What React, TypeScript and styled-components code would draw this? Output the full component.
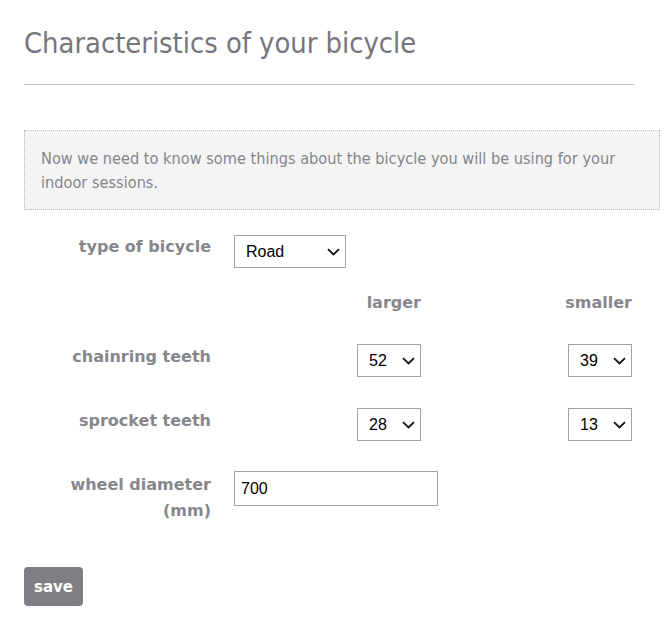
import styled, { createGlobalStyle } from 'styled-components';

const GlobalStyle = createGlobalStyle`
  body {
    margin: 0;
    background: #ffffff;
    font-family: "DejaVu Sans Condensed", "DejaVu Sans", sans-serif;
  }
`;

const Page = styled.div`
  padding: 0 4px 0 24px;
`;

const Title = styled.h1`
  margin: 26px 0 0;
  font-size: 28.8px;
  line-height: 34px;
  font-weight: normal;
  color: #76767b;
`;

const Rule = styled.hr`
  margin: 24px 26px 0 0;
  border: 0;
  border-top: 1px solid #bcbcbc;
`;

const Intro = styled.div`
  margin-top: 45px;
  padding: 16px 16px 14px;
  background: #f4f4f4;
  border: 1px dotted #b8b8b8;
  color: #85858a;
  font-size: 16.2px;
  line-height: 24px;
`;

const Form = styled.div`
  display: grid;
  grid-template-columns: 187px 187px 188px;
  column-gap: 23px;
  margin-top: 24px;
`;

const Row = styled.div`
  display: contents;
`;

const Label = styled.div<{ $top: number }>`
  grid-column: 1;
  margin-top: ${(p) => p.$top}px;
  text-align: right;
  font-family: "DejaVu Sans", sans-serif;
  font-weight: bold;
  font-size: 16px;
  line-height: 26px;
  color: #87878b;
`;

const Cell = styled.div<{ $top: number; $align?: string; $span?: number }>`
  margin-top: ${(p) => p.$top}px;
  display: flex;
  justify-content: ${(p) => p.$align ?? 'flex-start'};
  grid-column: ${(p) => (p.$span ? `span ${p.$span}` : 'auto')};
`;

const Heading = styled.div<{ $top: number }>`
  margin-top: ${(p) => p.$top}px;
  text-align: right;
  font-family: "DejaVu Sans", sans-serif;
  font-weight: bold;
  font-size: 16px;
  line-height: 20px;
  color: #87878b;
`;

const SelectWrap = styled.div<{ $width: number }>`
  position: relative;
  width: ${(p) => p.$width}px;
  height: 33px;
`;

const Select = styled.select`
  appearance: none;
  width: 100%;
  height: 100%;
  border: 1px solid #a3a3a3;
  border-radius: 0;
  background: #ffffff;
  padding: 0 0 0 11px;
  font-family: "Liberation Sans", Arial, sans-serif;
  font-size: 16px;
  color: #000000;
  outline: none;
`;

const Chevron = styled.svg`
  position: absolute;
  right: 6px;
  top: 13px;
  width: 13px;
  height: 8px;
  pointer-events: none;
`;

const TextInput = styled.input`
  box-sizing: border-box;
  width: 204px;
  height: 35px;
  border: 1px solid #a3a3a3;
  padding: 0 6px;
  font-family: "Liberation Sans", Arial, sans-serif;
  font-size: 16px;
  color: #000000;
  outline: none;
`;

const SaveButton = styled.button`
  display: block;
  margin-top: 43px;
  width: 59px;
  height: 39px;
  border: 0;
  border-radius: 4px;
  background: #7f7f83;
  color: #ffffff;
  font-family: "DejaVu Sans", sans-serif;
  font-weight: bold;
  font-size: 15px;
  padding: 0;
  cursor: pointer;
`;

function Dropdown({ width, value, options }: { width: number; value: string; options: string[] }) {
  return (
    <SelectWrap $width={width}>
      <Select defaultValue={value}>
        {options.map((o) => (
          <option key={o}>{o}</option>
        ))}
      </Select>
      <Chevron viewBox="0 0 13 8">
        <path d="M1 1.2 L6.5 6.5 L12 1.2" fill="none" stroke="#111" strokeWidth="1.8" />
      </Chevron>
    </SelectWrap>
  );
}

const range = (a: number, b: number) =>
  Array.from({ length: b - a + 1 }, (_, i) => String(a + i));

export default function App() {
  return (
    <>
      <GlobalStyle />
      <Page>
        <Title>Characteristics of your bicycle</Title>
        <Rule />
        <Intro>
          Now we need to know some things about the bicycle you will be using for your indoor sessions.
        </Intro>

        <Form>
          <Row>
            <Label $top={0}>type of bicycle</Label>
            <Cell $top={1} $span={2}>
              <Dropdown width={112} value="Road" options={['Road', 'Mountain', 'Hybrid']} />
            </Cell>
          </Row>

          <Row>
            <div />
            <Heading $top={25}>larger</Heading>
            <Heading $top={25}>smaller</Heading>
          </Row>

          <Row>
            <Label $top={31}>chainring teeth</Label>
            <Cell $top={31} $align="flex-end">
              <Dropdown width={64} value="52" options={range(44, 56)} />
            </Cell>
            <Cell $top={31} $align="flex-end">
              <Dropdown width={64} value="39" options={range(34, 42)} />
            </Cell>
          </Row>

          <Row>
            <Label $top={31}>sprocket teeth</Label>
            <Cell $top={31} $align="flex-end">
              <Dropdown width={64} value="28" options={range(21, 32)} />
            </Cell>
            <Cell $top={31} $align="flex-end">
              <Dropdown width={64} value="13" options={range(11, 16)} />
            </Cell>
          </Row>

          <Row>
            <Label $top={31}>wheel diameter (mm)</Label>
            <Cell $top={30} $span={2}>
              <TextInput defaultValue="700" />
            </Cell>
          </Row>
        </Form>

        <SaveButton>save</SaveButton>
      </Page>
    </>
  );
}
